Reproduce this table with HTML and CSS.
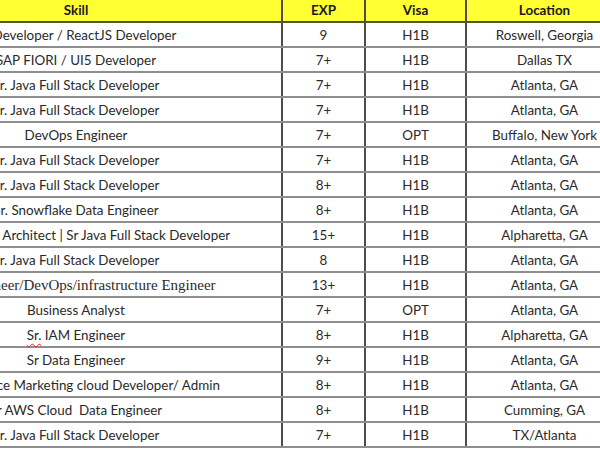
FILE: index.html
```html
<!DOCTYPE html>
<html>
<head>
<meta charset="utf-8">
<link rel="stylesheet" href="styles.css">
</head>
<body>
<div class="sheet">
  <div class="row head">
    <div class="cell">Skill</div><div class="cell">EXP</div><div class="cell">Visa</div><div class="cell">Location</div>
  </div>
  <div class="row"><div class="cell">UI Developer / ReactJS Developer</div><div class="cell">9</div><div class="cell">H1B</div><div class="cell">Roswell, Georgia</div></div>
  <div class="row"><div class="cell">SAP FIORI / UI5 Developer</div><div class="cell">7+</div><div class="cell">H1B</div><div class="cell">Dallas TX</div></div>
  <div class="row"><div class="cell">Sr. Java Full Stack Developer</div><div class="cell">7+</div><div class="cell">H1B</div><div class="cell">Atlanta, GA</div></div>
  <div class="row"><div class="cell">Sr. Java Full Stack Developer</div><div class="cell">7+</div><div class="cell">H1B</div><div class="cell">Atlanta, GA</div></div>
  <div class="row"><div class="cell">DevOps Engineer</div><div class="cell">7+</div><div class="cell">OPT</div><div class="cell">Buffalo, New York</div></div>
  <div class="row"><div class="cell">Sr. Java Full Stack Developer</div><div class="cell">7+</div><div class="cell">H1B</div><div class="cell">Atlanta, GA</div></div>
  <div class="row"><div class="cell">Sr. Java Full Stack Developer</div><div class="cell">8+</div><div class="cell">H1B</div><div class="cell">Atlanta, GA</div></div>
  <div class="row"><div class="cell">Sr. Snowflake Data Engineer</div><div class="cell">8+</div><div class="cell">H1B</div><div class="cell">Atlanta, GA</div></div>
  <div class="row"><div class="cell">Java Solution Architect | Sr Java Full Stack Developer</div><div class="cell">15+</div><div class="cell">H1B</div><div class="cell">Alpharetta, GA</div></div>
  <div class="row"><div class="cell">Sr. Java Full Stack Developer</div><div class="cell">8</div><div class="cell">H1B</div><div class="cell">Atlanta, GA</div></div>
  <div class="row"><div class="cell serif">Dev Engineer/DevOps/infrastructure Engineer</div><div class="cell">13+</div><div class="cell">H1B</div><div class="cell">Atlanta, GA</div></div>
  <div class="row"><div class="cell">Business Analyst</div><div class="cell">7+</div><div class="cell">OPT</div><div class="cell">Atlanta, GA</div></div>
  <div class="row"><div class="cell"><span class="spell">Sr.</span>&nbsp;IAM Engineer</div><div class="cell">8+</div><div class="cell">H1B</div><div class="cell">Alpharetta, GA</div></div>
  <div class="row"><div class="cell">Sr Data Engineer</div><div class="cell">9+</div><div class="cell">H1B</div><div class="cell">Atlanta, GA</div></div>
  <div class="row"><div class="cell">Sr. Salesforce Marketing cloud Developer/ Admin</div><div class="cell">8+</div><div class="cell">H1B</div><div class="cell">Atlanta, GA</div></div>
  <div class="row"><div class="cell">Sr AWS Cloud &nbsp;Data Engineer</div><div class="cell">8+</div><div class="cell">H1B</div><div class="cell">Cumming, GA</div></div>
  <div class="row"><div class="cell">Sr. Java Full Stack Developer</div><div class="cell">7+</div><div class="cell">H1B</div><div class="cell">TX/Atlanta</div></div>
</div>
</body>
</html>
```
FILE: styles.css
```css
html, body {
  margin: 0;
  padding: 0;
  background: #ffffff;
  overflow: hidden;
}
body {
  width: 600px;
  height: 450px;
  font-family: Lato, "Liberation Sans", sans-serif;
  font-size: 13.4px;
  color: #2a2a2a;
}
.sheet {
  margin-left: -129px;
  width: 753px;
}
.row {
  display: grid;
  grid-template-columns: 412px 83px 101px 157px;
  height: 25px;
  box-sizing: border-box;
  border-bottom: 2px solid #8e8e8e;
}
.row.head {
  height: 23px;
  background: #ffff33;
  border-bottom: 2px solid #55552a;
  font-weight: bold;
  color: #1a1a1a;
}
.cell {
  display: flex;
  align-items: center;
  justify-content: center;
  padding-top: 2px;
  white-space: nowrap;
  overflow: visible;
  border-right: 2px solid #4d4d4d;
  box-sizing: border-box;
  line-height: 1;
}
.head .cell {
  padding-top: 1px;
}
.serif {
  font-family: "Liberation Serif", serif;
  font-size: 15px;
}
.spell {
  text-decoration: underline wavy #e02020;
  text-decoration-thickness: 1px;
  text-underline-offset: 3px;
}
```
